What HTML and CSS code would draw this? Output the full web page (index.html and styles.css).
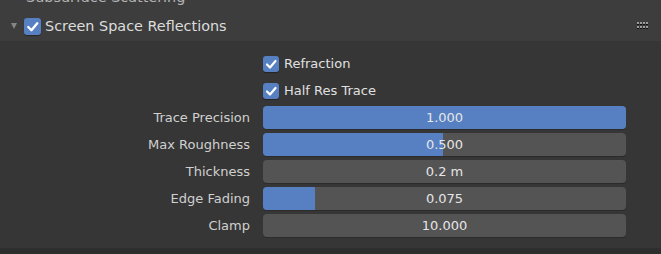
FILE: index.html
```html
<!DOCTYPE html>
<html lang="en">
<head>
  <meta charset="UTF-8" />
  <title>Screen Space Reflections</title>
  <link rel="stylesheet" href="styles.css">
</head>
<body>

<div class="prev-panel">
  <span class="prev-title">Subsurface Scattering</span>
</div>

<div class="panel">
  <div class="panel-header">
    <span class="disclosure"></span>
    <span class="check check-header">
      <svg viewBox="0 0 16 16"><path d="M4 8.5 L7 11.5 L12.5 5" /></svg>
    </span>
    <span class="panel-title">Screen Space Reflections</span>
    <span class="grip">
      <i></i><i></i><i></i><i></i>
      <i></i><i></i><i></i><i></i>
    </span>
  </div>

  <div class="panel-body">
    <div class="row">
      <div class="label"></div>
      <div class="control">
        <span class="check"><svg viewBox="0 0 16 16"><path d="M4 8.5 L7 11.5 L12.5 5" /></svg></span>
        <span class="check-text">Refraction</span>
      </div>
    </div>
    <div class="row">
      <div class="label"></div>
      <div class="control">
        <span class="check"><svg viewBox="0 0 16 16"><path d="M4 8.5 L7 11.5 L12.5 5" /></svg></span>
        <span class="check-text">Half Res Trace</span>
      </div>
    </div>
    <div class="row">
      <div class="label">Trace Precision</div>
      <div class="control">
        <div class="field"><div class="fill" style="width:100%"></div><span class="value">1.000</span></div>
      </div>
    </div>
    <div class="row">
      <div class="label">Max Roughness</div>
      <div class="control">
        <div class="field"><div class="fill" style="width:49.5%"></div><span class="value">0.500</span></div>
      </div>
    </div>
    <div class="row">
      <div class="label">Thickness</div>
      <div class="control">
        <div class="field"><span class="value">0.2 m</span></div>
      </div>
    </div>
    <div class="row">
      <div class="label">Edge Fading</div>
      <div class="control">
        <div class="field"><div class="fill" style="width:14.3%"></div><span class="value">0.075</span></div>
      </div>
    </div>
    <div class="row">
      <div class="label">Clamp</div>
      <div class="control">
        <div class="field"><span class="value">10.000</span></div>
      </div>
    </div>
  </div>
</div>

<div class="next-panel"></div>

</body>
</html>
```

FILE: styles.css
```css
body {
  margin: 0;
  width: 661px;
  height: 254px;
  overflow: hidden;
  background-color: #2e2e2e;
  font-family: "DejaVu Sans", sans-serif;
  font-size: 13px;
}

.prev-panel {
  height: 0;
  position: relative;
  z-index: 1;
}
.prev-title {
  position: absolute;
  left: 26px;
  top: -11px;
  color: #b4b4b4;
  font-size: 14.4px;
}

.panel-header {
  display: flex;
  align-items: center;
  height: 41px;
  background-color: #3d3d3d;
  box-sizing: border-box;
  padding: 11px 9px 0 11px;
}
.disclosure {
  width: 0; height: 0;
  border-left: 3.5px solid transparent;
  border-right: 3.5px solid transparent;
  border-top: 6px solid #858585;
  margin-right: 7px;
  margin-bottom: 1px;
}
.panel-title {
  color: #dcdcdc;
  font-size: 14.4px;
  margin-left: 4px;
  flex: 1;
}
.grip {
  display: grid;
  grid-template-columns: repeat(4, 2px);
  gap: 2px 1px;
  margin-bottom: 3px;
  margin-right: 4px;
}
.grip i {
  width: 2px; height: 2px;
  background: #9a9a9a;
  box-shadow: 0 1px 0 #111;
}

.check {
  display: inline-flex;
  width: 16px; height: 16px;
  border-radius: 3px;
  background-color: #5680c2;
  box-shadow: 0 1px 1px rgba(0,0,0,0.35);
}
.check svg {
  width: 16px; height: 16px;
}
.check path {
  fill: none;
  stroke: #fff;
  stroke-width: 2.2;
  stroke-linecap: round;
  stroke-linejoin: round;
}
.check-header {
  width: 17px; height: 17px;
}
.check-header svg { width: 17px; height: 17px; }

.panel-body {
  background-color: #363636;
  padding: 9px 35px 9px 0;
}
.row {
  display: flex;
  align-items: center;
  height: 27px;
}
.label {
  width: 250px;
  text-align: right;
  color: #d0d0d0;
  margin-right: 13px;
}
.control {
  flex: 1;
  display: flex;
  align-items: center;
}
.check-text {
  color: #e0e0e0;
  margin-left: 5px;
}

.field {
  position: relative;
  flex: 1;
  height: 23px;
  background-color: #545454;
  border-radius: 4px;
  box-shadow: 0 1px 0 #2b2b2b;
  overflow: hidden;
}
.fill {
  position: absolute;
  left: 0; top: 0; bottom: 0;
  background-color: #5680c2;
}
.value {
  position: relative;
  display: block;
  line-height: 23px;
  text-align: center;
  color: #e6e6e6;
}

.next-panel {
  height: 6px;
  background-color: #2e2e2e;
}
```
